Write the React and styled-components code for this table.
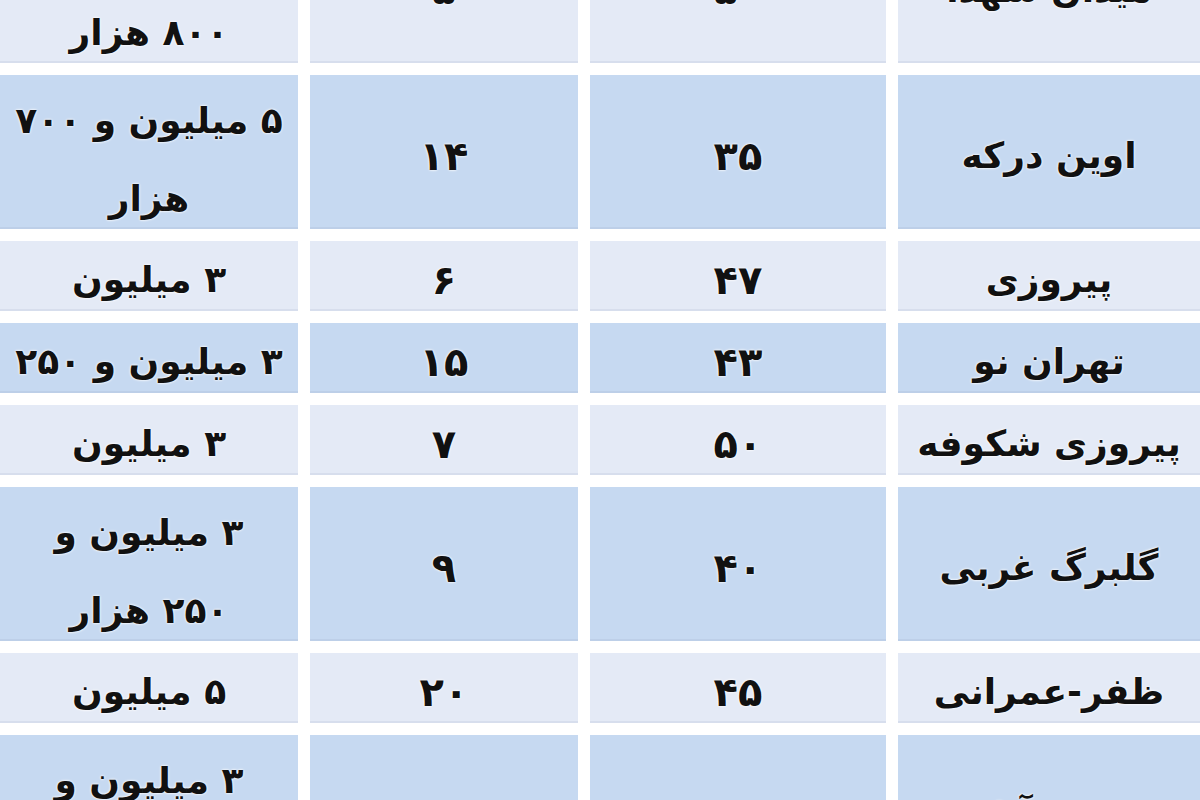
import React from 'react';
import styled, { createGlobalStyle } from 'styled-components';

const GlobalStyle = createGlobalStyle`
  html, body {
    margin: 0;
    padding: 0;
    background: #ffffff;
    overflow: hidden;
  }
`;

const tones = {
  light: '#e4eaf6',
  blue: '#c6d9f1',
};

const rows = [
  { tall: true, tone: 'light', cells: ['میدان شهدا', '۵۰', '۵', ['۳ میلیون و', '۸۰۰ هزار']] },
  { tall: true, tone: 'blue', cells: ['اوین درکه', '۳۵', '۱۴', ['۵ میلیون و ۷۰۰', 'هزار']] },
  { tone: 'light', cells: ['پیروزی', '۴۷', '۶', '۳ میلیون'] },
  { tone: 'blue', cells: ['تهران نو', '۴۳', '۱۵', '۳ میلیون و ۲۵۰'] },
  { tone: 'light', cells: ['پیروزی شکوفه', '۵۰', '۷', '۳ میلیون'] },
  { tall: true, tone: 'blue', cells: ['گلبرگ غربی', '۴۰', '۹', ['۳ میلیون و', '۲۵۰ هزار']] },
  { tone: 'light', cells: ['ظفر-عمرانی', '۴۵', '۲۰', '۵ میلیون'] },
  { tall: true, tone: 'blue', cells: ['جنت آباد', '۳۸', '۱۰', ['۳ میلیون و', '۵۰۰ هزار']] },
];

export default function App() {
  return (
    <>
      <GlobalStyle />
      <Table>
        {rows.map((row, i) => (
          <Row key={i} $tall={row.tall}>
            {row.cells.map((cell, j) => (
              <Cell key={j} $tone={row.tone} $num={j === 1 || j === 2}>
                {Array.isArray(cell) ? (
                  <Lines>
                    {cell.map((line, k) => (
                      <span key={k}>{line}</span>
                    ))}
                  </Lines>
                ) : (
                  cell
                )}
              </Cell>
            ))}
          </Row>
        ))}
      </Table>
    </>
  );
}

const Table = styled.div`
  display: flex;
  flex-direction: column;
  gap: 12px;
  margin-top: -91px;
  direction: rtl;
`;

const Row = styled.div`
  display: grid;
  grid-template-columns: 302px 296px 268px 298px;
  grid-template-rows: 100%;
  column-gap: 12px;
  height: ${(p) => (p.$tall ? 154 : 70)}px;
  flex: none;
`;

const Cell = styled.div`
  display: flex;
  align-items: center;
  justify-content: center;
  text-align: center;
  overflow: hidden;
  background: ${(p) => tones[p.$tone]};
  box-shadow: inset 0 -2px 0 rgba(120, 140, 170, 0.12);
  font-family: "DejaVu Sans", "Noto Sans", sans-serif;
  font-weight: bold;
  font-size: ${(p) => (p.$num ? 40 : 36)}px;
  line-height: 1.3;
  color: #111111;
  text-shadow: 0 0 3px #ffffff, 0 0 2px #ffffff;
  padding-top: 8px;
  box-sizing: border-box;
`;

const Lines = styled.div`
  display: flex;
  flex-direction: column;
  align-items: center;
  line-height: 78px;
  padding-top: 8px;
`;
